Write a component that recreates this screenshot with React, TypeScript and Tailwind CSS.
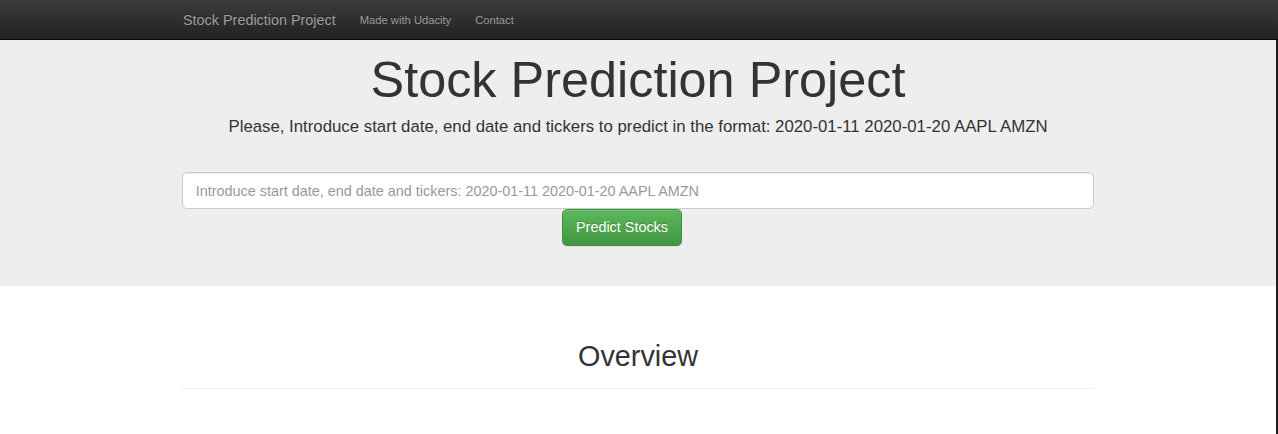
import { useState } from "react";

const font = { fontFamily: '"Liberation Sans", Arial, sans-serif' };

const Navbar = () => (
  <nav className="h-10 bg-gradient-to-b from-[#3c3c3c] to-[#222222] border-b border-[#080808]">
    <div className="w-[912px] mx-auto flex items-start">
      <a href="#" className="-ml-3 px-3 pt-3 pb-3 text-[14.4px] leading-4 text-[#9d9d9d] [text-shadow:0_-1px_0_rgba(0,0,0,0.25)]">
        Stock Prediction Project
      </a>
      <ul className="flex">
        <li>
          <a href="#" className="block px-3 pt-3 pb-3 text-[11.2px] leading-4 text-[#9d9d9d] [text-shadow:0_-1px_0_rgba(0,0,0,0.25)]">
            Made with Udacity
          </a>
        </li>
        <li>
          <a href="#" className="block px-3 pt-3 pb-3 text-[11.2px] leading-4 text-[#9d9d9d] [text-shadow:0_-1px_0_rgba(0,0,0,0.25)]">
            Contact
          </a>
        </li>
      </ul>
    </div>
  </nav>
);

export default function App() {
  const [query, setQuery] = useState("");

  return (
    <div className="w-[1278px] min-h-[434px] bg-white text-[#333333]" style={font}>
      <Navbar />
      <div className="border-r-2 border-[#1e1e1e] min-h-[394px]">
        <section className="bg-[#eeeeee] pt-3 pb-10">
          <div className="w-[912px] mx-auto flex flex-col items-center">
            <h1 className="text-[50.4px] leading-[1.1] text-[#333333] text-center">
              Stock Prediction Project
            </h1>
            <p className="mt-[7.6px] text-[16.8px] leading-6 text-[#333333] text-center">
              Please, Introduce start date, end date and tickers to predict in the format: 2020-01-11 2020-01-20 AAPL AMZN
            </p>
            <input
              type="text"
              value={query}
              onChange={(e) => setQuery(e.target.value)}
              placeholder="Introduce start date, end date and tickers: 2020-01-11 2020-01-20 AAPL AMZN"
              className="mt-[33px] w-full h-[37px] px-[12.8px] bg-white border border-[#cccccc] rounded-[4.8px] text-[14.4px] text-[#555555] placeholder:text-[#999999] shadow-[inset_0_1px_1px_rgba(0,0,0,0.075)] outline-none"
            />
            <button
              type="button"
              className="mr-8 h-[37px] px-[12.8px] text-[14.4px] text-white bg-gradient-to-b from-[#5cb85c] to-[#419641] border border-[#3e8f3e] rounded-[4.8px] [text-shadow:0_-1px_0_rgba(0,0,0,0.2)] shadow-[inset_0_1px_0_rgba(255,255,255,0.15),0_1px_1px_rgba(0,0,0,0.075)]"
            >
              Predict Stocks
            </button>
          </div>
        </section>
        <section className="w-[912px] mx-auto pt-[55px]">
          <h2 className="text-[28.8px] leading-[1.1] text-center text-[#333333]">Overview</h2>
          <hr className="mt-[15px] border-t border-[#eeeeee]" />
        </section>
      </div>
    </div>
  );
}
